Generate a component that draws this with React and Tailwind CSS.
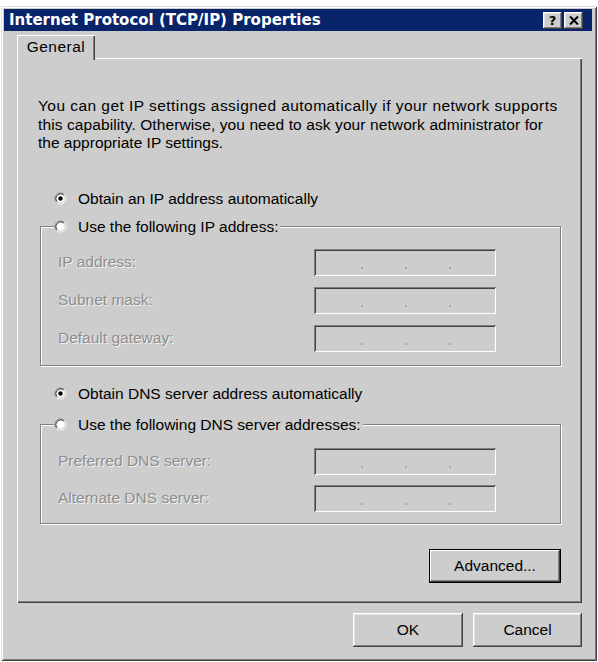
import React from "react";

const FONT = { fontFamily: '"Liberation Sans", Arial, sans-serif' };

function Radio({ checked }) {
  return (
    <svg width="13" height="13" viewBox="0 0 13 13" className="shrink-0">
      <circle cx="6.5" cy="6.5" r="4.5" fill="#ffffff" />
      <path d="M2.61 10.39 A5.5 5.5 0 0 1 10.39 2.61" fill="none" stroke="#808080" strokeWidth="1" />
      <path d="M10.39 2.61 A5.5 5.5 0 0 1 2.61 10.39" fill="none" stroke="#ffffff" strokeWidth="1" />
      <path d="M3.32 9.68 A4.5 4.5 0 0 1 9.68 3.32" fill="none" stroke="#404040" strokeWidth="1" />
      <path d="M9.68 3.32 A4.5 4.5 0 0 1 3.32 9.68" fill="none" stroke="#d4d0c8" strokeWidth="1" />
      {checked && <circle cx="6.5" cy="6.5" r="2.2" fill="#000000" />}
    </svg>
  );
}

function RadioRow({ checked, label, className = "" }) {
  return (
    <div className={"flex h-[20px] items-center gap-[11px] " + className}>
      <Radio checked={checked} />
      <span className="whitespace-nowrap text-[15.5px] text-black">{label}</span>
    </div>
  );
}

function IpField() {
  return (
    <div className="flex h-[27px] w-[182px] items-end bg-[#cdcdcd] pb-[7px] pl-[47px] gap-[42px] shadow-[inset_1px_1px_0_#808080,inset_-1px_-1px_0_#ffffff,inset_2px_2px_0_#404040,inset_-2px_-2px_0_#d4d0c8]">
      <div className="h-[2px] w-[2px] bg-[#a8a8a8]" />
      <div className="h-[2px] w-[2px] bg-[#a8a8a8]" />
      <div className="h-[2px] w-[2px] bg-[#a8a8a8]" />
    </div>
  );
}

function FieldRow({ label }) {
  return (
    <div className="flex h-[27px] items-center justify-between">
      <span className="whitespace-nowrap text-[15.5px] text-[#8e8e8e] [text-shadow:1px_1px_0_rgba(255,255,255,0.75)]">
        {label}
      </span>
      <IpField />
    </div>
  );
}

function Group({ legend, rows, className = "", pt, pb, gap }) {
  return (
    <fieldset
      className={
        "ml-[2px] w-[521px] border border-[#808080] shadow-[inset_1px_1px_0_#ffffff,1px_1px_0_#ffffff] " +
        className
      }
    >
      <legend className="ml-[13px] bg-[#cdcdcd] pr-[2px]">
        <RadioRow checked={false} label={legend} />
      </legend>
      <div className={"flex flex-col pl-[17px] pr-[64px] " + pt + " " + pb + " " + gap}>
        {rows.map((r) => (
          <FieldRow key={r} label={r} />
        ))}
      </div>
    </fieldset>
  );
}

const raised =
  "shadow-[inset_-1px_-1px_0_#404040,inset_1px_1px_0_#ffffff,inset_-2px_-2px_0_#808080,inset_2px_2px_0_#e4e4e4]";

export default function App() {
  return (
    <div className="h-[662px] w-[598px] overflow-hidden bg-white pt-[6px]" style={FONT}>
      <div className="ml-[1px] flex h-[655px] w-[596px] flex-col bg-[#cdcdcd] pb-[4px] pl-[3px] pr-[5px] pt-[3px] shadow-[inset_1px_1px_0_#dcdcdc,inset_-1px_-1px_0_#404040,inset_2px_2px_0_#ffffff,inset_-2px_-2px_0_#808080]">
        {/* Title bar */}
        <div className="flex h-[22px] items-center justify-between bg-[#0a246a] pl-[5px] pr-[9px]">
          <span
            className="whitespace-nowrap text-[15px] font-bold leading-none text-white"
            style={{ fontFamily: '"DejaVu Sans", Verdana, sans-serif' }}
          >
            Internet Protocol (TCP/IP) Properties
          </span>
          <div className="flex gap-[2px]">
            <div className={"flex h-[17px] w-[19px] items-center justify-center bg-[#cdcdcd] " + raised}>
              <span
                className="text-[13px] font-bold leading-none text-black"
                style={{ fontFamily: '"DejaVu Sans", Verdana, sans-serif' }}
              >
                ?
              </span>
            </div>
            <div className={"flex h-[17px] w-[19px] items-center justify-center bg-[#cdcdcd] " + raised}>
              <svg width="10" height="9" viewBox="0 0 10 9">
                <path d="M1 0.5 L9 8.5 M9 0.5 L1 8.5" stroke="#000" strokeWidth="2" />
              </svg>
            </div>
          </div>
        </div>

        {/* Body */}
        <div className="flex flex-col pl-[13px] pt-[4px]">
          {/* Tab */}
          <div className="relative z-10 -mb-[2px] flex h-[25px] w-[78px] items-start justify-center bg-[#cdcdcd] pt-[2px] shadow-[inset_1px_1px_0_#ffffff,inset_-1px_0_0_#404040,inset_-2px_0_0_#808080]">
            <span className="text-[15.5px] leading-[19px] tracking-[0.5px] text-black">General</span>
          </div>

          {/* Panel */}
          <div className="flex h-[545px] w-[565px] flex-col px-[21px] pt-[39px] shadow-[inset_1px_1px_0_#ffffff,inset_-1px_-1px_0_#404040,inset_-2px_-2px_0_#808080]">
            <p className="whitespace-nowrap text-[15.5px] leading-[18.5px] text-black">
              <span className="tracking-[0.45px]">
                You can get IP settings assigned automatically if your network supports
              </span>
              <br />
              <span className="tracking-[0.1px]">
                this capability. Otherwise, you need to ask your network administrator for
              </span>
              <br />
              the appropriate IP settings.
            </p>

            <RadioRow checked label="Obtain an IP address automatically" className="ml-[16px] mt-[36px]" />

            <Group
              legend="Use the following IP address:"
              rows={["IP address:", "Subnet mask:", "Default gateway:"]}
              className="mt-[8px]"
              pt="pt-[12px]"
              pb="pb-[13px]"
              gap="gap-[11px]"
            />

            <RadioRow checked label="Obtain DNS server address automatically" className="ml-[16px] mt-[18px]" />

            <Group
              legend="Use the following DNS server addresses:"
              rows={["Preferred DNS server:", "Alternate DNS server:"]}
              className="mt-[11px]"
              pt="pt-[13px]"
              pb="pb-[11px]"
              gap="gap-[10px]"
            />

            <div className="mt-[25px] flex justify-end">
              <button className="flex h-[34px] w-[132px] items-center justify-center bg-[#cdcdcd] text-[15.5px] text-black shadow-[inset_0_0_0_1px_#000000,inset_-2px_-2px_0_#404040,inset_2px_2px_0_#ffffff,inset_-3px_-3px_0_#808080]">
                Advanced...
              </button>
            </div>
          </div>

          {/* Bottom buttons */}
          <div className="mt-[10px] flex w-[565px] justify-end gap-[10px]">
            <button className={"flex h-[34px] w-[110px] items-center justify-center bg-[#cdcdcd] text-[15.5px] text-black " + raised}>
              OK
            </button>
            <button className={"flex h-[34px] w-[109px] items-center justify-center bg-[#cdcdcd] text-[15.5px] text-black " + raised}>
              Cancel
            </button>
          </div>
        </div>
      </div>
    </div>
  );
}
